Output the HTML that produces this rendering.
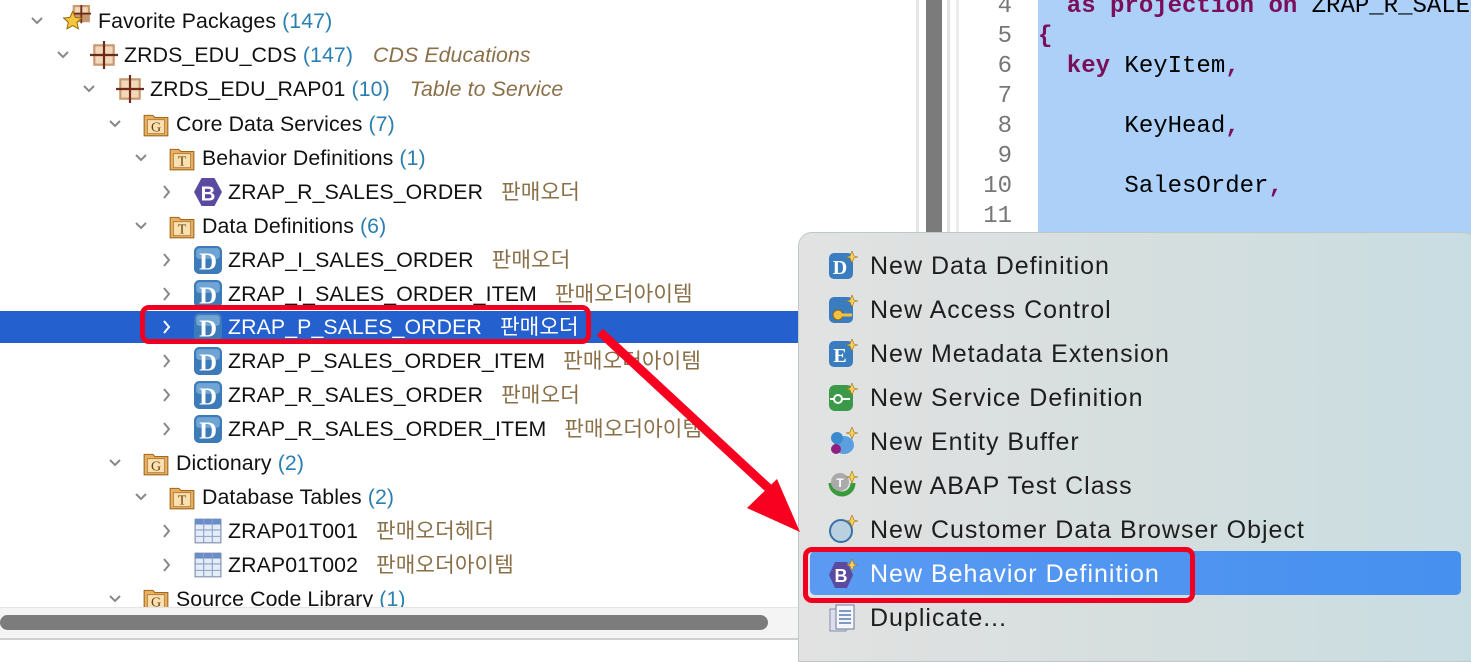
<!DOCTYPE html>
<html><head><meta charset="utf-8"><style>
*{margin:0;padding:0;box-sizing:border-box}
body{width:1471px;height:647px;overflow:hidden;background:#fff;position:relative;font-family:"Liberation Sans","Noto Sans CJK KR",sans-serif}
.r{position:absolute;height:34px;line-height:34px;font-size:21.3px;letter-spacing:0.1px;color:#111;white-space:nowrap}
.n{color:#2a7fb0}
.d{color:#8a7048;margin-left:12px}
.i{font-style:italic;margin-left:20px;color:#8a7048}
.chev{position:absolute;width:14px;height:34px}
.ic{position:absolute;width:28px;height:28px}
.code{position:absolute;font-family:"Liberation Mono",monospace;font-size:24px;line-height:30px;white-space:pre}
.k{color:#7a0e5a;font-weight:bold}
.ln{position:absolute;left:960px;width:52px;text-align:right;font-family:"Liberation Mono",monospace;font-size:24px;color:#777;line-height:30px}
.mi{position:absolute;left:870px;font-size:25px;letter-spacing:1px;color:#1e1e1e;line-height:44px;height:44px;white-space:nowrap}
.mic{position:absolute;left:828px;width:30px;height:30px}
</style></head><body>
<div style="position:absolute;left:916px;top:0;width:3px;height:647px;background:#e6e6e6"></div>
<div style="position:absolute;left:926px;top:0;width:16px;height:647px;background:#7b7b7b"></div>
<div style="position:absolute;left:947px;top:0;width:3px;height:647px;background:#e2e2e2"></div>
<div style="position:absolute;left:956px;top:0;width:3px;height:647px;background:#ececec"></div>
<div style="position:absolute;left:1038px;top:0;width:433px;height:647px;background:#acd0f7"></div>
<div class="ln" style="top:-8px">4<br>5<br>6<br>7<br>8<br>9<br>10<br>11</div>
<div class="code" style="left:1038px;top:-8px"><span class="k">  as projection on </span><span>ZRAP_R_SALES</span>
<span class="k">{</span>
<span class="k">  key </span><span>KeyItem</span><span class="k">,</span>

<span>      KeyHead</span><span class="k">,</span>

<span>      SalesOrder</span><span class="k">,</span></div>

<div style="position:absolute;left:0;top:311px;width:800px;height:32px;background:#2461cf"></div>

<svg width="0" height="0" style="position:absolute"><defs>
<symbol id="cd" viewBox="0 0 14 34"><path d="M2 14l5 5 5-5" stroke="#888" stroke-width="2" fill="none"/></symbol>
<symbol id="cr" viewBox="0 0 14 34"><path d="M4 11l5 6-5 6" stroke="#888" stroke-width="2" fill="none"/></symbol>
<symbol id="pk" viewBox="0 0 26 26"><rect x="3" y="3" width="20" height="20" fill="#c89870"/><rect x="5" y="5" width="7" height="7" fill="#f2d8b8"/><rect x="14" y="5" width="7" height="7" fill="#f2d8b8"/><rect x="5" y="14" width="7" height="7" fill="#f2d8b8"/><rect x="14" y="14" width="7" height="7" fill="#f2d8b8"/><path d="M13 0v26M0 13h26" stroke="#6b2a1a" stroke-width="2"/></symbol>
<symbol id="fg" viewBox="0 0 26 26"><path d="M2 5h8l2 2h12v17H2z" fill="#e8b060" stroke="#a06820"/><rect x="5" y="9" width="16" height="13" fill="#f8e0b0" stroke="#b07830" stroke-width=".8"/><text x="13" y="20" font-size="13" font-family="Liberation Serif" text-anchor="middle" fill="#6a4010">G</text></symbol>
<symbol id="ft" viewBox="0 0 26 26"><path d="M2 5h8l2 2h12v17H2z" fill="#e8b060" stroke="#a06820"/><rect x="5" y="9" width="16" height="13" fill="#f8e0b0" stroke="#b07830" stroke-width=".8"/><text x="13" y="20" font-size="13" font-family="Liberation Serif" text-anchor="middle" fill="#6a4010">T</text></symbol>
<symbol id="dd" viewBox="0 0 26 26"><rect x="0" y="0" width="26" height="26" rx="5" fill="#3d7bb8"/><rect x="2" y="2" width="22" height="10" rx="3" fill="#6fa4d4"/><text x="13" y="22" font-size="23" font-weight="bold" font-family="Liberation Serif" text-anchor="middle" fill="#fff">D</text></symbol>
<symbol id="bb" viewBox="0 0 26 26"><path d="M7 0h12l7 13-7 13H7L0 13z" fill="#5a4aa0"/><text x="13" y="21" font-size="19" font-weight="bold" font-family="Liberation Sans" text-anchor="middle" fill="#fff">B</text></symbol>
<symbol id="tb" viewBox="0 0 26 26"><rect x="1" y="2" width="24" height="22" fill="#e4ecf8" stroke="#7a8aa8"/><rect x="1" y="2" width="24" height="5" fill="#6a8cc8"/><path d="M1 12h24M1 18h24M9 2v22M17 2v22" stroke="#8aa0c8"/></symbol>
</defs></svg>

<svg class="chev" style="left:30px;top:4px" viewBox="0 0 14 34"><use href="#cd"/></svg>
<svg class="ic" style="left:63px;top:5px" viewBox="0 0 26 26"><rect x="9" y="0" width="16" height="16" fill="#c89870"/><rect x="11" y="2" width="5" height="5" fill="#f2d8b8"/><rect x="18" y="2" width="5" height="5" fill="#f2d8b8"/><path d="M17 -1v18M8 8h18" stroke="#6b2a1a" stroke-width="1.6"/><path d="M9 6l2.5 5.5 6 .6-4.5 4 1.3 6-5.3-3-5.3 3 1.3-6-4.5-4 6-.6z" fill="#f6c640" stroke="#a07010"/></svg>
<div class="r" style="left:98px;top:4px">Favorite Packages <span class="n">(147)</span></div>

<svg class="chev" style="left:56px;top:38px" viewBox="0 0 14 34"><use href="#cd"/></svg>
<svg class="ic" style="left:90px;top:41px" viewBox="0 0 26 26"><use href="#pk"/></svg>
<div class="r" style="left:124px;top:38px">ZRDS_EDU_CDS <span class="n">(147)</span><span class="i">CDS Educations</span></div>

<svg class="chev" style="left:82px;top:72px" viewBox="0 0 14 34"><use href="#cd"/></svg>
<svg class="ic" style="left:116px;top:75px" viewBox="0 0 26 26"><use href="#pk"/></svg>
<div class="r" style="left:150px;top:72px">ZRDS_EDU_RAP01 <span class="n">(10)</span><span class="i">Table to Service</span></div>

<svg class="chev" style="left:108px;top:107px" viewBox="0 0 14 34"><use href="#cd"/></svg>
<svg class="ic" style="left:142px;top:110px" viewBox="0 0 26 26"><use href="#fg"/></svg>
<div class="r" style="left:176px;top:107px">Core Data Services <span class="n">(7)</span></div>

<svg class="chev" style="left:134px;top:141px" viewBox="0 0 14 34"><use href="#cd"/></svg>
<svg class="ic" style="left:168px;top:144px" viewBox="0 0 26 26"><use href="#ft"/></svg>
<div class="r" style="left:202px;top:141px">Behavior Definitions <span class="n">(1)</span></div>

<svg class="chev" style="left:160px;top:175px" viewBox="0 0 14 34"><use href="#cr"/></svg>
<svg class="ic" style="left:194px;top:178px" viewBox="0 0 26 26"><use href="#bb"/></svg>
<div class="r" style="left:228px;top:175px">ZRAP_R_SALES_ORDER<span class="d">&nbsp;판매오더</span></div>

<svg class="chev" style="left:134px;top:209px" viewBox="0 0 14 34"><use href="#cd"/></svg>
<svg class="ic" style="left:168px;top:212px" viewBox="0 0 26 26"><use href="#ft"/></svg>
<div class="r" style="left:202px;top:209px">Data Definitions <span class="n">(6)</span></div>

<svg class="chev" style="left:160px;top:243px" viewBox="0 0 14 34"><use href="#cr"/></svg>
<svg class="ic" style="left:194px;top:246px" viewBox="0 0 26 26"><use href="#dd"/></svg>
<div class="r" style="left:228px;top:243px">ZRAP_I_SALES_ORDER<span class="d">&nbsp;판매오더</span></div>

<svg class="chev" style="left:160px;top:277px" viewBox="0 0 14 34"><use href="#cr"/></svg>
<svg class="ic" style="left:194px;top:280px" viewBox="0 0 26 26"><use href="#dd"/></svg>
<div class="r" style="left:228px;top:277px">ZRAP_I_SALES_ORDER_ITEM<span class="d">&nbsp;판매오더아이템</span></div>

<svg class="chev" style="left:160px;top:310px" viewBox="0 0 14 34"><path d="M4 11l5 6-5 6" stroke="#fff" stroke-width="2" fill="none"/></svg>
<svg class="ic" style="left:194px;top:313px" viewBox="0 0 26 26"><use href="#dd"/></svg>
<div class="r" style="left:228px;top:310px;color:#fff">ZRAP_P_SALES_ORDER<span class="d" style="color:#fff">&nbsp;판매오더</span></div>

<svg class="chev" style="left:160px;top:344px" viewBox="0 0 14 34"><use href="#cr"/></svg>
<svg class="ic" style="left:194px;top:347px" viewBox="0 0 26 26"><use href="#dd"/></svg>
<div class="r" style="left:228px;top:344px">ZRAP_P_SALES_ORDER_ITEM<span class="d">&nbsp;판매오더아이템</span></div>

<svg class="chev" style="left:160px;top:378px" viewBox="0 0 14 34"><use href="#cr"/></svg>
<svg class="ic" style="left:194px;top:381px" viewBox="0 0 26 26"><use href="#dd"/></svg>
<div class="r" style="left:228px;top:378px">ZRAP_R_SALES_ORDER<span class="d">&nbsp;판매오더</span></div>

<svg class="chev" style="left:160px;top:412px" viewBox="0 0 14 34"><use href="#cr"/></svg>
<svg class="ic" style="left:194px;top:415px" viewBox="0 0 26 26"><use href="#dd"/></svg>
<div class="r" style="left:228px;top:412px">ZRAP_R_SALES_ORDER_ITEM<span class="d">&nbsp;판매오더아이템</span></div>

<svg class="chev" style="left:108px;top:446px" viewBox="0 0 14 34"><use href="#cd"/></svg>
<svg class="ic" style="left:142px;top:449px" viewBox="0 0 26 26"><use href="#fg"/></svg>
<div class="r" style="left:176px;top:446px">Dictionary <span class="n">(2)</span></div>

<svg class="chev" style="left:134px;top:480px" viewBox="0 0 14 34"><use href="#cd"/></svg>
<svg class="ic" style="left:168px;top:483px" viewBox="0 0 26 26"><use href="#ft"/></svg>
<div class="r" style="left:202px;top:480px">Database Tables <span class="n">(2)</span></div>

<svg class="chev" style="left:160px;top:514px" viewBox="0 0 14 34"><use href="#cr"/></svg>
<svg class="ic" style="left:194px;top:517px" viewBox="0 0 26 26"><use href="#tb"/></svg>
<div class="r" style="left:228px;top:514px">ZRAP01T001<span class="d">&nbsp;판매오더헤더</span></div>

<svg class="chev" style="left:160px;top:548px" viewBox="0 0 14 34"><use href="#cr"/></svg>
<svg class="ic" style="left:194px;top:551px" viewBox="0 0 26 26"><use href="#tb"/></svg>
<div class="r" style="left:228px;top:548px">ZRAP01T002<span class="d">&nbsp;판매오더아이템</span></div>

<svg class="chev" style="left:108px;top:582px" viewBox="0 0 14 34"><use href="#cd"/></svg>
<svg class="ic" style="left:142px;top:585px" viewBox="0 0 26 26"><use href="#fg"/></svg>
<div class="r" style="left:176px;top:582px">Source Code Library <span class="n">(1)</span></div>

<div style="position:absolute;left:0;top:607px;width:916px;height:33px;background:#f4f4f4;border-top:1px solid #e4e4e4;border-bottom:2px solid #d0d0d0"></div>
<div style="position:absolute;left:0;top:615px;width:768px;height:15px;border-radius:8px;background:#7c7c7c"></div>

<div style="position:absolute;left:140px;top:305px;width:451px;height:39px;border:5px solid #f00020;border-radius:9px"></div>

<div style="position:absolute;left:798px;top:232px;width:680px;height:430px;border-radius:14px 14px 0 0;background:linear-gradient(90deg,#e2e2e2 0%,#d6dede 50%,#c8dde2 100%);border:1px solid #bfc8c8"></div>
<div style="position:absolute;left:810px;top:551px;width:651px;height:44px;border-radius:5px;background:linear-gradient(90deg,#5a9af2,#4690ef)"></div>

<svg class="mic" style="top:251px" viewBox="0 0 30 30"><rect x="1" y="2" width="24" height="26" rx="5" fill="#3a7cc0"/><text x="12" y="23" font-size="20" font-weight="bold" font-family="Liberation Serif" text-anchor="middle" fill="#fff">D</text><path d="M24 0l2 5 4 1-4 1-2 5-2-5-4-1 4-1z" fill="#f6d060" stroke="#a07010" stroke-width=".6"/></svg>
<div class="mi" style="top:244px">New Data Definition</div>
<svg class="mic" style="top:295px" viewBox="0 0 30 30"><rect x="1" y="2" width="24" height="26" rx="5" fill="#3a7cc0"/><circle cx="10" cy="20" r="5" fill="#f0c040" stroke="#906010"/><path d="M14 20h10" stroke="#f0c040" stroke-width="3"/><path d="M24 0l2 5 4 1-4 1-2 5-2-5-4-1 4-1z" fill="#f6d060" stroke="#a07010" stroke-width=".6"/></svg>
<div class="mi" style="top:288px">New Access Control</div>
<svg class="mic" style="top:339px" viewBox="0 0 30 30"><rect x="1" y="2" width="24" height="26" rx="5" fill="#3a7cc0"/><text x="12" y="23" font-size="20" font-weight="bold" font-family="Liberation Serif" text-anchor="middle" fill="#fff">E</text><path d="M24 0l2 5 4 1-4 1-2 5-2-5-4-1 4-1z" fill="#f6d060" stroke="#a07010" stroke-width=".6"/></svg>
<div class="mi" style="top:332px">New Metadata Extension</div>
<svg class="mic" style="top:383px" viewBox="0 0 30 30"><rect x="1" y="2" width="24" height="26" rx="6" fill="#3a9a4a"/><circle cx="10" cy="16" r="4" fill="none" stroke="#fff" stroke-width="2"/><path d="M2 16h4M14 16h8" stroke="#fff" stroke-width="2"/><path d="M24 0l2 5 4 1-4 1-2 5-2-5-4-1 4-1z" fill="#f6d060" stroke="#a07010" stroke-width=".6"/></svg>
<div class="mi" style="top:376px">New Service Definition</div>
<svg class="mic" style="top:427px" viewBox="0 0 30 30"><ellipse cx="16" cy="18" rx="10" ry="9" fill="#5aa0e0"/><circle cx="9" cy="11" r="6" fill="#3a8ad0"/><circle cx="8" cy="22" r="5" fill="#902080"/><path d="M24 0l2 5 4 1-4 1-2 5-2-5-4-1 4-1z" fill="#f6d060" stroke="#a07010" stroke-width=".6"/></svg>
<div class="mi" style="top:420px">New Entity Buffer</div>
<svg class="mic" style="top:471px" viewBox="0 0 30 30"><path d="M3 12a11 11 0 0 0 22 0" fill="none" stroke="#3a9a3a" stroke-width="5"/><circle cx="12" cy="11" r="9" fill="#aaa"/><text x="12" y="16" font-size="12" font-weight="bold" text-anchor="middle" fill="#fff" font-family="Liberation Sans">T</text><path d="M24 0l2 5 4 1-4 1-2 5-2-5-4-1 4-1z" fill="#f6d060" stroke="#a07010" stroke-width=".6"/></svg>
<div class="mi" style="top:464px">New ABAP Test Class</div>
<svg class="mic" style="top:515px" viewBox="0 0 30 30"><circle cx="13" cy="16" r="11" fill="#b8d0e0" stroke="#3a70a8" stroke-width="2"/><path d="M24 0l2 5 4 1-4 1-2 5-2-5-4-1 4-1z" fill="#f6d060" stroke="#a07010" stroke-width=".6"/></svg>
<div class="mi" style="top:508px">New Customer Data Browser Object</div>
<svg class="mic" style="top:559px" viewBox="0 0 30 30"><path d="M7 3h12l6 13-6 13H7L1 16z" fill="#5a4aa0"/><text x="13" y="23" font-size="18" font-weight="bold" font-family="Liberation Sans" text-anchor="middle" fill="#fff">B</text><path d="M24 0l2 5 4 1-4 1-2 5-2-5-4-1 4-1z" fill="#f6d060" stroke="#a07010" stroke-width=".6"/></svg>
<div class="mi" style="top:552px;color:#fff">New Behavior Definition</div>
<svg class="mic" style="top:603px" viewBox="0 0 30 30"><rect x="2" y="6" width="16" height="22" fill="#dde" stroke="#8090a8"/><rect x="8" y="2" width="18" height="24" fill="#f4f6fa" stroke="#6a7a98"/><path d="M11 8h12M11 12h12M11 16h12M11 20h12" stroke="#5a7ab0" stroke-width="1.5"/></svg>
<div class="mi" style="top:596px">Duplicate...</div>

<div style="position:absolute;left:803px;top:547px;width:392px;height:56px;border:5px solid #f00020;border-radius:9px"></div>

<svg style="position:absolute;left:0;top:0" width="1471" height="647">
<path d="M600 332L778 497" stroke="#f80020" stroke-width="9"/>
<path d="M800 532L747 508L777 479z" fill="#f80020"/>
</svg>
</body></html>
